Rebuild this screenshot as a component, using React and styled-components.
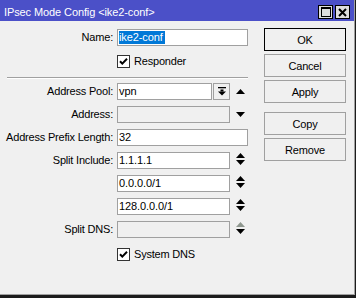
import React from 'react';
import styled, { createGlobalStyle } from 'styled-components';

const Global = createGlobalStyle`
  html, body { margin: 0; padding: 0; background: #ffffff; }
  body { font-family: "Liberation Sans", Arial, sans-serif; font-size: 11px; color: #000; }
  #root { width: 357px; height: 298px; }
`;

const Frame = styled.div`
  width: 356px;
  height: 298px;
  box-sizing: border-box;
  border-right: 1px solid #1c1c1c;
  border-bottom: 3px solid #1c1c1c;
  background: #f0f0f0;
`;

const Inner = styled.div`
  height: 100%;
  box-sizing: border-box;
  border-right: 1px solid #a0a0a0;
  border-bottom: 1px solid #a0a0a0;
  display: flex;
  flex-direction: column;
`;

const TitleBar = styled.div`
  height: 21px;
  flex: none;
  background: #4b50c8;
  display: flex;
  align-items: flex-start;
  padding: 0 4px 0 4px;
  color: #fff;
`;

const TitleText = styled.div`
  flex: 1;
  margin-top: 6px;
  line-height: 13px;
  font-size: 11px;
  letter-spacing: -0.1px;
  white-space: nowrap;
`;

const TitleButtons = styled.div`
  display: flex;
  gap: 2px;
  margin-top: 5px;
`;

const TitleButton = styled.div`
  width: 15px;
  height: 14px;
  box-sizing: border-box;
  border: 1px solid #000;
  background: #dedede;
  display: flex;
  align-items: center;
  justify-content: center;
`;

const Body = styled.div`
  flex: 1;
  display: flex;
  padding-top: 7px;
`;

const Form = styled.div`
  width: 248px;
  display: flex;
  flex-direction: column;
  padding-top: 1px;
`;

const Row = styled.div`
  display: grid;
  grid-template-columns: 113px 131px;
  column-gap: 4px;
  height: 17px;
  margin-top: ${p => p.$top || 0}px;
`;

const Label = styled.div`
  text-align: right;
  white-space: nowrap;
  line-height: 17px;
  letter-spacing: -0.2px;
`;

const Field = styled.div`
  display: flex;
  align-items: center;
  grid-column: 2;
`;

const TextBox = styled.div`
  box-sizing: border-box;
  width: ${p => p.$w}px;
  height: 17px;
  flex: none;
  border: 1px solid #a0a0a0;
  background: ${p => (p.$disabled ? '#f0f0f0' : '#ffffff')};
  padding: 0 1px;
  line-height: 15px;
  white-space: nowrap;
  overflow: hidden;
  letter-spacing: -0.1px;
`;

const Selected = styled.span`
  display: inline-block;
  background: #0078d7;
  color: #fff;
  line-height: 13px;
  padding-right: 2px;
  vertical-align: top;
  margin-top: 1px;
`;

const DropButton = styled.div`
  box-sizing: border-box;
  width: 17px;
  height: 17px;
  margin-left: 1px;
  border: 1px solid #a0a0a0;
  background: #f0f0f0;
  display: flex;
  align-items: center;
  justify-content: center;
`;

const IconSlot = styled.div`
  width: 18px;
  box-sizing: border-box;
  padding-left: 6px;
  display: flex;
  align-self: stretch;
  align-items: ${p => (p.$top ? 'flex-start' : 'center')};
  padding-top: ${p => (p.$top ? 1 : 0)}px;
`;

const CheckRow = styled.div`
  display: flex;
  align-items: center;
  gap: 4px;
  margin-left: 117px;
  height: 13px;
  margin-top: ${p => p.$top || 0}px;
`;

const CheckBox = styled.div`
  width: 13px;
  height: 13px;
  box-sizing: border-box;
  border: 1px solid #333;
  background: #fff;
  display: flex;
  align-items: center;
  justify-content: center;
`;

const CheckLabel = styled.span`
  letter-spacing: -0.2px;
  line-height: 13px;
`;

const Separator = styled.div`
  margin: 9px 0 4px 7px;
  width: 241px;
  height: 0;
  border-top: 1px solid #a0a0a0;
  border-bottom: 1px solid #ffffff;
`;

const Buttons = styled.div`
  margin-left: 16px;
  width: 82px;
  display: flex;
  flex-direction: column;
  gap: 9px;
`;

const ButtonGroup = styled.div`
  display: flex;
  flex-direction: column;
  gap: 3px;
`;

const Button = styled.div`
  box-sizing: border-box;
  height: 23px;
  border: 1px solid ${p => (p.$default ? '#000' : '#a0a0a0')};
  background: #f0f0f0;
  display: flex;
  align-items: center;
  justify-content: center;
  letter-spacing: -0.2px;
`;

const UpTri = () => (
  <svg width="9" height="5" viewBox="0 0 9 5"><polygon points="4.5,0 9,5 0,5" fill="#000" /></svg>
);
const DownTri = () => (
  <svg width="9" height="5" viewBox="0 0 9 5"><polygon points="0,0 9,0 4.5,5" fill="#000" /></svg>
);
const UpDown = ({ dim }) => (
  <svg width="9" height="12" viewBox="0 0 9 12">
    <polygon points="4.5,0 9,5 0,5" fill={dim ? '#8f978f' : '#000'} />
    <polygon points="0,7 9,7 4.5,12" fill="#000" />
  </svg>
);
const DropIcon = () => (
  <svg width="8" height="9" viewBox="0 0 8 9">
    <rect x="0" y="0" width="8" height="1.3" fill="#000" />
    <rect x="2.5" y="2.5" width="3" height="2" fill="#000" />
    <polygon points="0,4.5 8,4.5 4,8.5" fill="#000" />
  </svg>
);
const Check = () => (
  <svg width="11" height="11" viewBox="0 0 11 11">
    <path d="M2 5.2 L4.3 7.6 L9 2.8" stroke="#000" strokeWidth="2" fill="none" />
  </svg>
);
const MaxIcon = () => (
  <svg width="10" height="10" viewBox="0 0 10 10">
    <rect x="0.5" y="0.5" width="9" height="9" fill="none" stroke="#000" strokeWidth="1" />
    <rect x="0" y="0" width="10" height="2" fill="#000" />
  </svg>
);
const CloseIcon = () => (
  <svg width="9" height="9" viewBox="0 0 9 9">
    <path d="M1 1 L8 8 M8 1 L1 8" stroke="#000" strokeWidth="2" />
  </svg>
);

const splits = ['1.1.1.1', '0.0.0.0/1', '128.0.0.0/1'];

export default function App() {
  return (
    <>
      <Global />
      <Frame>
        <Inner>
          <TitleBar>
            <TitleText>IPsec Mode Config &lt;ike2-conf&gt;</TitleText>
            <TitleButtons>
              <TitleButton><MaxIcon /></TitleButton>
              <TitleButton><CloseIcon /></TitleButton>
            </TitleButtons>
          </TitleBar>
          <Body>
            <Form>
              <Row>
                <Label>Name:</Label>
                <Field>
                  <TextBox $w={131}><Selected>ike2-conf</Selected></TextBox>
                </Field>
              </Row>
              <CheckRow $top={9}>
                <CheckBox><Check /></CheckBox>
                <CheckLabel>Responder</CheckLabel>
              </CheckRow>
              <Separator />
              <Row>
                <Label>Address Pool:</Label>
                <Field>
                  <TextBox $w={95}>vpn</TextBox>
                  <DropButton><DropIcon /></DropButton>
                  <IconSlot><UpTri /></IconSlot>
                </Field>
              </Row>
              <Row $top={6}>
                <Label>Address:</Label>
                <Field>
                  <TextBox $w={113} $disabled />
                  <IconSlot><DownTri /></IconSlot>
                </Field>
              </Row>
              <Row $top={6}>
                <Label>Address Prefix Length:</Label>
                <Field>
                  <TextBox $w={131}>32</TextBox>
                </Field>
              </Row>
              {splits.map((s, i) => (
                <Row $top={6} key={s}>
                  <Label>{i === 0 ? 'Split Include:' : ''}</Label>
                  <Field>
                    <TextBox $w={113}>{s}</TextBox>
                    <IconSlot $top><UpDown /></IconSlot>
                  </Field>
                </Row>
              ))}
              <Row $top={6}>
                <Label>Split DNS:</Label>
                <Field>
                  <TextBox $w={113} $disabled />
                  <IconSlot $top><UpDown dim /></IconSlot>
                </Field>
              </Row>
              <CheckRow $top={10}>
                <CheckBox><Check /></CheckBox>
                <CheckLabel>System DNS</CheckLabel>
              </CheckRow>
            </Form>
            <Buttons>
              <ButtonGroup>
                <Button $default>OK</Button>
                <Button>Cancel</Button>
                <Button>Apply</Button>
              </ButtonGroup>
              <ButtonGroup>
                <Button>Copy</Button>
                <Button>Remove</Button>
              </ButtonGroup>
            </Buttons>
          </Body>
        </Inner>
      </Frame>
    </>
  );
}
